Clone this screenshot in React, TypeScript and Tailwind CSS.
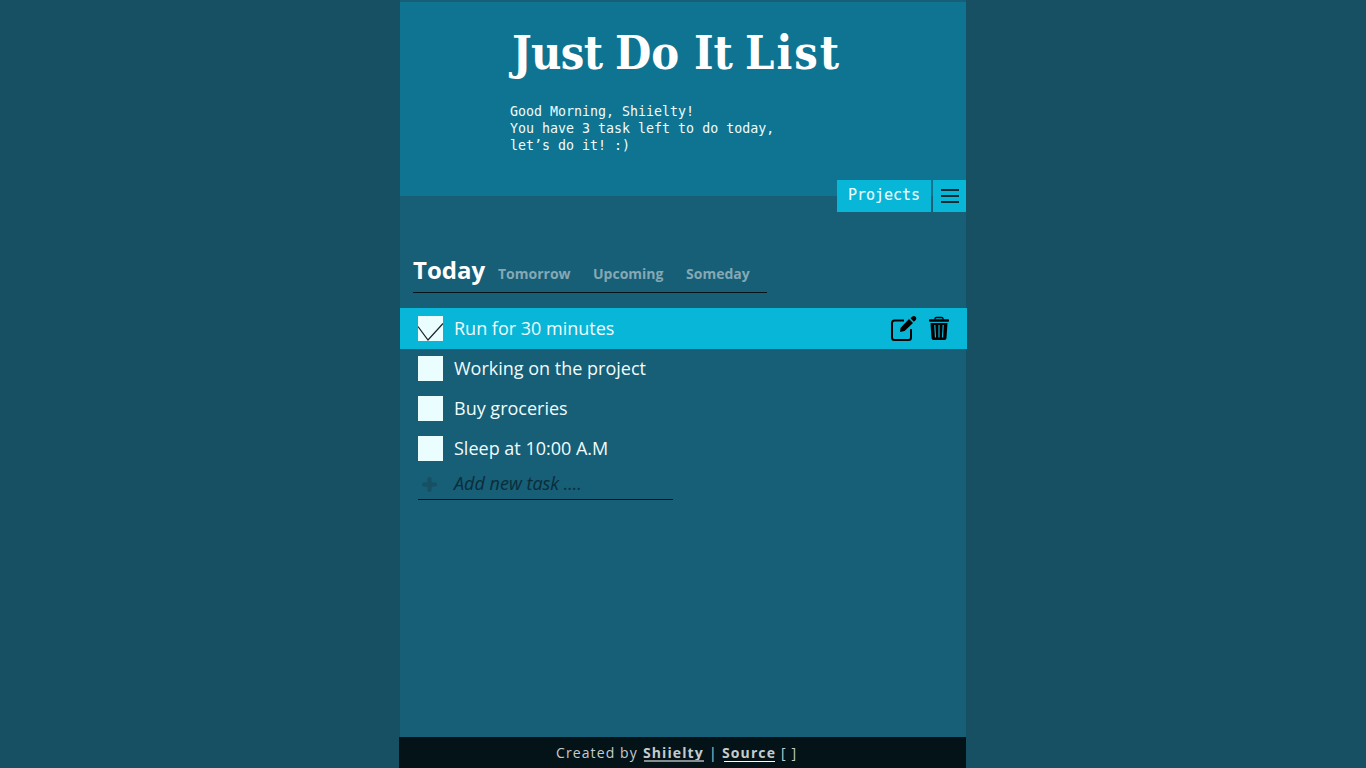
import React from "react";

const tasks = [
  { label: "Run for 30 minutes", done: true },
  { label: "Working on the project", done: false },
  { label: "Buy groceries", done: false },
  { label: "Sleep at 10:00 A.M", done: false },
];

function EditIcon() {
  return (
    <svg className="block h-[26px] w-[26px]" viewBox="0 0 26 26" fill="none">
      <path d="M13 4.500H3.500Q1 4.500 1 7V21.500Q1 24 3.500 24H17.500Q20 24 20 21.500V13" stroke="#000" strokeWidth="2" />
      <path d="M9.500 12L18 3L22 7L13.500 15L9 16Z" fill="#000" />
      <path d="M19.500 2.200L21 .7Q23.300-.8 25 1.300Q25.800 3.300 24.300 4.500L22.800 5.800Z" fill="#000" />
    </svg>
  );
}

function TrashIcon() {
  return (
    <svg className="block h-6 w-5" viewBox="0 0 20 24" fill="none">
      <path d="M6 3.500V2.500Q6 1.500 7.500 1.500H12.500Q14 1.500 14 2.500V3.500" stroke="#000" strokeWidth="1.300" />
      <rect x="0" y="3.300" width="20" height="2.500" rx="0.800" fill="#000" />
      <path d="M1.500 7H18.500L17.500 22Q17.300 24 15.500 24H4.500Q2.700 24 2.500 22Z" fill="#000" />
      <path d="M5.800 9L6.500 21.500M10 9V21.500M14.200 9L13.500 21.500" stroke="#08b6d8" strokeWidth="1.200" />
    </svg>
  );
}

function Task({ label, done }: { label: string; done: boolean }) {
  return (
    <li className={done ? "-mr-px flex h-[41px] bg-[#08b6d8] pl-[18px] pt-2" : "flex h-10 pl-[18px] pt-[7px]"}>
      <span className="block h-[25px] w-[25px] shrink-0 bg-[#ebfeff]">
        {done && (
          <svg className="block h-[25px] w-[25px]" viewBox="0 0 25 25" fill="none">
            <path d="M0 10.500L10 24L25 7.500" stroke="#1a2426" strokeWidth="1.200" />
          </svg>
        )}
      </span>
      <span className="ml-[11px] text-[18px] leading-[25px] text-[#f0fcfd]">{label}</span>
      {done && (
        <span className="ml-auto mr-[18px] flex gap-3">
          <EditIcon />
          <TrashIcon />
        </span>
      )}
    </li>
  );
}

export default function App() {
  return (
    <div className="flex h-screen justify-center overflow-hidden bg-[#174f63] font-['Open_Sans',sans-serif]">
      <main className="flex h-full w-[566px] flex-col bg-[#175e77] pt-0.5">
        <header className="flex h-[194px] shrink-0 flex-col bg-[#0f7491]">
          <h1 className="ml-[112px] mt-[16px] flex h-[70px] whitespace-pre font-['DejaVu_Serif_Condensed','DejaVu_Serif',serif] text-[46.5px] font-bold leading-[70px] text-white">
            <span className="w-[103px] tracking-[-0.7px]">{"Just "}</span>
            <span className="w-[79px]">{"Do "}</span>
            <span className="w-[51px]">{"It "}</span>
            <span className="tracking-[2px]">List</span>
          </h1>
          <p className="ml-[110px] mt-[15px] whitespace-pre font-['DejaVu_Sans_Mono',monospace] text-[13.3px] leading-[17px] text-[#f0fcfd]">
            {"Good Morning, Shiielty!\nYou have 3 task left to do today,\nlet’s do it! :)"}
          </p>
          <div className="mt-auto -mb-4 flex h-8 shrink-0 justify-end gap-0.5">
            <button className="h-8 w-[94px] bg-[#08b6d8] pb-0.5 font-['DejaVu_Sans_Mono',monospace] text-[15px] leading-[30px] text-[#ebfeff] [-webkit-text-stroke:0.1px_#ebfeff]">
              Projects
            </button>
            <button className="flex h-8 w-[33px] flex-col items-center justify-center gap-1 bg-[#08b6d8]" aria-label="Menu">
              <span className="h-0.5 w-[18px] bg-[#072b34]" />
              <span className="h-0.5 w-[18px] bg-[#072b34]" />
              <span className="h-0.5 w-[18px] bg-[#072b34]" />
            </button>
          </div>
        </header>

        <nav className="ml-[13px] mt-[56px] flex h-[41px] w-[354px] shrink-0 items-baseline whitespace-nowrap border-b border-[#041318] text-sm font-bold text-[#84a9b5]">
          <span className="w-[85px] text-2xl leading-9 text-white">Today</span>
          <span className="w-[95px]">Tomorrow</span>
          <span className="w-[93px]">Upcoming</span>
          <span>Someday</span>
        </nav>

        <ul className="mt-[15px] shrink-0">
          {tasks.map((t) => (
            <Task key={t.label} {...t} />
          ))}
        </ul>
        <div className="ml-[18px] flex h-[31px] w-[255px] shrink-0 items-start border-b border-[#041318]">
          <svg className="ml-1 mt-2 block h-[15px] w-[15px]" viewBox="0 0 15 15">
            <path d="M7.500 2V13M2 7.500H13" stroke="#174f63" strokeWidth="4" strokeLinecap="round" />
          </svg>
          <span className="ml-[17px] mt-0.5 text-[18px] italic leading-[25px] text-[#0a2d39]">Add new task ....</span>
        </div>

        <footer className="-ml-px mt-auto flex h-[31px] shrink-0 whitespace-pre bg-[#041318] pl-[157px] text-[14px] leading-[31px] tracking-[1.1px] text-[#c5cccd]">
          <span className="w-[87px]">Created by</span>
          <span className="flex w-[66px] flex-col font-bold">
            <span className="h-[23px]">Shiielty</span>
            <span className="ml-px h-0.5 w-[60px] bg-[#858d8f]" />
          </span>
          <span className="w-[13px]">|</span>
          <span className="flex w-[59px] flex-col font-bold">
            <span className="h-6">Source</span>
            <span className="ml-0.5 h-px w-[51px] bg-white" />
          </span>
          <span>[ ]</span>
        </footer>
      </main>
    </div>
  );
}
